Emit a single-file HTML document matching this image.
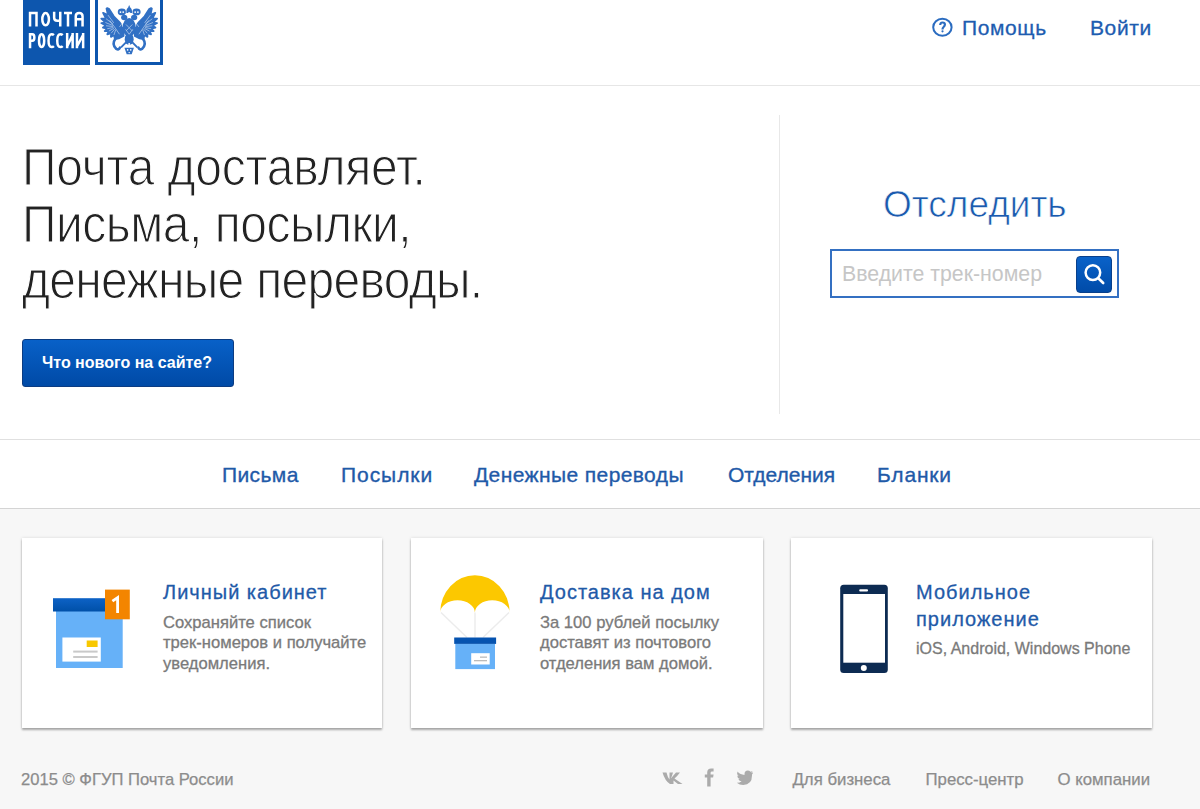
<!DOCTYPE html>
<html><head><meta charset="utf-8">
<style>
*{margin:0;padding:0;box-sizing:border-box}
html,body{width:1200px;height:809px;overflow:hidden;background:#f7f7f7;font-family:"Liberation Sans",sans-serif}
.abs{position:absolute;white-space:nowrap}
svg{position:absolute;overflow:visible}
#top{position:absolute;left:0;top:0;width:1200px;height:508px;background:#fff}
#hline{position:absolute;left:0;top:85px;width:1200px;height:1px;background:#e6e6e6}
#vline{position:absolute;left:779px;top:115px;width:1px;height:299px;background:#e8e8e8}
#nline1{position:absolute;left:0;top:438.7px;width:1200px;height:1px;background:#e0e0e0}
#nline2{position:absolute;left:0;top:508px;width:1200px;height:1px;background:#d4d4d4}
#logo1{position:absolute;left:23px;top:-5px;width:67px;height:70px;background:#0d56ae}
#logo2{position:absolute;left:95px;top:-5px;width:68px;height:70px;border:3px solid #0d56ae;border-bottom-width:3.5px;background:#fff}
.hdr{color:#1d5cb0;font-size:21px;line-height:1;letter-spacing:0.6px;-webkit-text-stroke:0.3px #1d5cb0}
.hero{color:#222;font-size:48px;line-height:1;-webkit-text-stroke:1.1px #fff;transform:scaleY(1.065);transform-origin:0 0}
#btn{position:absolute;left:22px;top:338.5px;width:212px;height:48px;border-radius:3px;background:linear-gradient(#0861c8,#004aa6);border:1px solid #0b3c82;color:#fff;font-weight:bold;font-size:16px;line-height:46px;text-align:center;padding-right:2px}
#track{color:#1a5aae;font-size:37px;line-height:1;-webkit-text-stroke:0.7px #fff}
#inp{position:absolute;left:830px;top:249px;width:289px;height:49px;border:2px solid #3470c2;background:#fff}
#sbtn{position:absolute;left:1076px;top:256px;width:36px;height:37px;border-radius:4px;background:linear-gradient(#0962c9,#004ba8);border:1px solid #08408c}
.ph{color:#c6c6c6;font-size:21.3px;line-height:1}
.nav{color:#1f5aa8;font-size:21px;line-height:1;-webkit-text-stroke:0.35px #1f5aa8}
.card{position:absolute;top:538px;height:190px;background:#fff;box-shadow:0 1.5px 2px rgba(0,0,0,0.3),0 0 3px rgba(0,0,0,0.13)}
.ct{color:#1f5aa8;font-size:20px;line-height:27px;letter-spacing:1px;-webkit-text-stroke:0.3px #1f5aa8}
.cd{color:#7a7a7a;font-size:16.6px;line-height:20.4px;-webkit-text-stroke:0.3px #7a7a7a}
.ft{color:#8c8c8c;font-size:16.8px;line-height:1;-webkit-text-stroke:0.25px #8c8c8c}
</style></head><body>
<div id="top"></div>
<div id="hline"></div>
<div id="vline"></div>
<div id="nline1"></div>
<div id="nline2"></div>

<!-- logo -->
<div id="logo1"></div>
<svg style="left:0;top:0" width="100" height="60" viewBox="0 0 100 60" fill="none" stroke="#fff" stroke-width="2.5">
  <path d="M30.05,26.6V13.05H36.5V26.6"/>
  <ellipse cx="45.6" cy="19.2" rx="3.3" ry="6.15"/>
  <path d="M54.15,11.8V17.8Q54.15,20.8 57.3,20.8H60.25M60.25,11.8V26.6"/>
  <path d="M64,13.05H72M68,11.8V26.6"/>
  <path d="M75.75,26.6V16.3Q75.75,13.05 79.15,13.05Q82.55,13.05 82.55,16.3V26.6M75.75,19.2H82.55"/>
  <path d="M30.05,48.2V34.35H32.2Q34.35,34.35 34.35,37.5Q34.35,40.8 32.2,40.8H30.05"/>
  <ellipse cx="41.6" cy="40.65" rx="2.6" ry="6.3"/>
  <path d="M53.9,35.2Q53,34.35 51.6,34.35Q48.55,34.35 48.55,40.65Q48.55,46.95 51.6,46.95Q53,46.95 53.9,46.1"/>
  <path d="M62.7,35.2Q61.8,34.35 60.3,34.35Q57.25,34.35 57.25,40.65Q57.25,46.95 60.3,46.95Q61.8,46.95 62.7,46.1"/>
  <path d="M67.15,33.1V48.2M67.15,46.5L72.65,34.8M72.65,33.1V48.2"/>
  <path d="M76.95,33.1V48.2M76.95,46.5L83.15,34.8M83.15,33.1V48.2"/>
</svg>
<div id="logo2"></div>
<svg style="left:95px;top:0" width="70" height="66" viewBox="0 0 858 809">
  <g fill="#3170c4">
    <path d="M150,100 175,112 230,200 299,270 322,300 325,335 350,345 350,440 290,470 244,480 232,429 195,452 198,407 151,420 170,381 119,381 150,352 97,338 135,316 77,283 128,276 77,229 136,230 99,158 159,185 141,104Z" stroke="#3170c4" stroke-width="22" stroke-linejoin="round"/>
    <path d="M688,100 663,112 608,200 539,270 516,300 513,335 488,345 488,440 548,470 594,480 606,429 643,452 640,407 687,420 668,381 719,381 688,352 741,338 703,316 761,283 710,276 761,229 702,230 739,158 679,185 697,104Z" stroke="#3170c4" stroke-width="22" stroke-linejoin="round"/>
    <ellipse cx="419" cy="335" rx="80" ry="115"/>
    <ellipse cx="419" cy="480" rx="55" ry="70"/>
    <ellipse cx="358" cy="215" rx="38" ry="34"/>
    <ellipse cx="480" cy="215" rx="38" ry="34"/>
    <ellipse cx="329" cy="146" rx="50" ry="42"/>
    <ellipse cx="509" cy="146" rx="50" ry="42"/>
    <path d="M384,160 Q380,95 419,85 Q458,95 454,160Z"/><path d="M405,95 L419,62 L433,95Z"/>
    <path d="M361,585 L477,585 L450,665 L388,665Z"/>
  </g>
  <g fill="none" stroke="#3170c4" stroke-linecap="round">
    <path stroke-width="32" d="M250,475 Q200,545 262,600 Q290,615 305,585"/>
    <path stroke-width="32" d="M588,475 Q638,545 576,600 Q548,615 533,585"/>
    <path stroke-width="24" d="M419,480 L325,575 M419,480 L513,575"/>
  </g>
  <g fill="none" stroke="#fff" stroke-width="10" opacity="0.6">
    <path d="M232,429L254,364 M198,407L242,356 M170,381L232,348 M150,352L226,337 M135,316L220,325 M128,276L218,312 M136,230L221,296 M159,185L229,280"/>
    <path d="M606,429L584,364 M640,407L596,356 M668,381L606,348 M688,352L612,337 M703,316L618,325 M710,276L620,312 M702,230L617,296 M679,185L609,280"/>
    <path d="M180,250 Q240,330 300,420 M658,250 Q598,330 538,420"/>
    <path d="M380,300 L458,380 M458,300 L380,380 M375,360 L419,420 L463,360 M345,270 L300,330 M493,270 L538,330"/>
  </g>
  <g fill="#fff">
    <rect x="407" y="150" width="24" height="50"/>
    <circle cx="312" cy="148" r="11"/><circle cx="346" cy="148" r="11"/>
    <circle cx="492" cy="148" r="11"/><circle cx="526" cy="148" r="11"/>
    
    <circle cx="266" cy="545" r="13"/><circle cx="572" cy="545" r="13"/>
    <circle cx="400" cy="612" r="10"/><circle cx="438" cy="612" r="10"/><circle cx="419" cy="645" r="9"/>
    <circle cx="419" cy="540" r="12"/>
  </g>
</svg>

<!-- header right -->
<svg style="left:930px;top:15px" width="26" height="26" viewBox="0 0 26 26">
  <ellipse cx="12.4" cy="12.3" rx="9.2" ry="8.45" fill="none" stroke="#2b6cc0" stroke-width="2"/>
  <path d="M10.2,10Q10.2,7.5 12.5,7.5Q14.9,7.5 14.9,9.6Q14.9,10.9 13.6,12Q12.5,12.9 12.5,14.6" fill="none" stroke="#2b6cc0" stroke-width="2.2"/>
  <circle cx="12.5" cy="16.3" r="1.1" fill="#2b6cc0"/>
</svg>
<div class="abs hdr" id="help" style="left:962px;top:16.5px">Помощь</div>
<div class="abs hdr" id="login" style="left:1090px;top:16.5px">Войти</div>

<!-- hero -->
<div class="abs hero" style="left:22px;top:142px;letter-spacing:-0.2px">Почта доставляет.</div>
<div class="abs hero" style="left:22px;top:198.6px;letter-spacing:-0.5px">Письма, посылки,</div>
<div class="abs hero" style="left:22px;top:255.2px;letter-spacing:-0.7px">денежные переводы.</div>
<div id="btn">Что нового на сайте?</div>

<!-- track -->
<div class="abs" id="track" style="left:883px;top:186px">Отследить</div>
<div id="inp"></div>
<div id="sbtn"></div>
<svg style="left:1076px;top:256px" width="36" height="37" viewBox="0 0 36 37">
  <circle cx="16.9" cy="16.6" r="7.3" fill="none" stroke="#fff" stroke-width="2.5"/>
  <path d="M22.3,22.2L27.2,27" stroke="#fff" stroke-width="2.6" stroke-linecap="round"/>
</svg>
<div class="abs ph" id="ph" style="left:842px;top:264px">Введите трек-номер</div>

<!-- nav -->
<div class="abs nav" style="left:222px;top:464px;letter-spacing:0.4px">Письма</div>
<div class="abs nav" style="left:341px;top:464px;letter-spacing:0.95px">Посылки</div>
<div class="abs nav" style="left:474px;top:464px;letter-spacing:0.4px">Денежные переводы</div>
<div class="abs nav" style="left:728px;top:464px">Отделения</div>
<div class="abs nav" style="left:877px;top:464px;letter-spacing:0.8px">Бланки</div>

<!-- cards -->
<div class="card" style="left:22px;width:360px"></div>
<div class="card" style="left:411px;width:352px"></div>
<div class="card" style="left:791px;width:361px"></div>

<svg style="left:0;top:0" width="140" height="700" viewBox="0 0 140 700">
  <defs><linearGradient id="g1" x1="0" y1="0" x2="0" y2="1"><stop offset="0" stop-color="#0d62c6"/><stop offset="1" stop-color="#0050a8"/></linearGradient></defs>
  <rect x="56" y="611" width="66.7" height="57" fill="#66b1f8"/>
  <rect x="53" y="598.2" width="52" height="13.3" fill="url(#g1)"/>
  <rect x="105" y="589.6" width="24.8" height="29.7" fill="#f38500"/>
  <path d="M112.4,601.2L117.6,597.6V613" fill="none" stroke="#fff" stroke-width="2.8"/>
  <rect x="62.4" y="637.5" width="38.4" height="24.1" fill="#fff"/>
  <rect x="86.7" y="640.5" width="10.9" height="6.5" fill="#f8c800"/>
  <rect x="73.2" y="650.6" width="24.4" height="2" fill="#c9c9c9"/>
  <rect x="73.2" y="656" width="24.4" height="2" fill="#c9c9c9"/>
</svg>
<div class="abs ct" style="left:163px;top:579px">Личный кабинет</div>
<div class="abs cd" style="left:163px;top:612.8px">Сохраняйте список<br>трек-номеров и получайте<br>уведомления.</div>

<svg style="left:400px;top:560px" width="130" height="130" viewBox="400 560 130 130">
  <path d="M441,612.5L467,637.5M475,612.5V637.5M509,612.5L483,637.5" stroke="#ececec" stroke-width="1.4"/>
  <path d="M440.2,612.6A34.7,37.4 0 0 1 509.6,612.6A17.3,12.3 0 0 0 474.9,612.6A17.3,12.3 0 0 0 440.2,612.6Z" fill="#fcc800"/>
  <rect x="455.3" y="643.9" width="39.7" height="25.2" fill="#66b1f8"/>
  <rect x="454.2" y="637.5" width="41.9" height="6.4" fill="#0553b0"/>
  <rect x="471.2" y="653.2" width="18.5" height="11.3" fill="#fff"/>
  <rect x="480" y="656.5" width="7" height="1.3" fill="#bbb"/>
  <rect x="474" y="660" width="13" height="1.3" fill="#bbb"/>
</svg>
<div class="abs ct" style="left:540px;top:579px">Доставка на дом</div>
<div class="abs cd" style="left:540px;top:612.8px">За 100 рублей посылку<br>доставят из почтового<br>отделения вам домой.</div>

<svg style="left:830px;top:575px" width="70" height="110" viewBox="830 575 70 110">
  <rect x="840.2" y="584.8" width="47.6" height="88.1" rx="3.5" fill="#0d2b52"/>
  <rect x="843.3" y="594" width="41.7" height="68.7" fill="#fff"/>
  <rect x="859.2" y="589.3" width="8.8" height="2.3" rx="1" fill="#fff"/>
  <circle cx="863.8" cy="668" r="3" fill="#fff"/>
</svg>
<div class="abs ct" style="left:916px;top:579px">Мобильное<br>приложение</div>
<div class="abs cd" style="left:916px;top:639px;font-size:16px">iOS, Android, Windows Phone</div>

<!-- footer -->
<div class="abs ft" style="left:21px;top:772px;font-size:16.6px">2015 © ФГУП Почта России</div>
<svg style="left:650px;top:760px" width="120" height="40" viewBox="650 760 120 40" fill="#ababab">
  <path d="M662.5,772.5H666.5Q667.5,777 669.5,779.5V772.5H673Q672,776.5 670.8,778.5L676,772.5H680Q677,776.5 674.5,778.5Q678,781 682.5,784H678Q675,781.5 673.5,780.5V784H670Q665,781 662.5,772.5Z"/>
  <path d="M707.2,786.5V777.5H704.8V774.6H707.2V772.6Q707.2,768.5 711.2,768.5H713.6V771.6H712Q710.6,771.6 710.6,772.8V774.6H713.6L713.1,777.5H710.6V786.5Z"/>
  <path d="M753,772.2Q752,772.7 751.2,772.8Q752.2,772.1 752.5,771Q751.5,771.6 750.5,771.8Q749.4,770.6 747.8,770.6Q744.5,770.6 744.5,774.2V774.9Q740.2,774.7 737.5,771.5Q736.3,773.8 738.5,775.9Q737.8,775.9 737.2,775.5Q737.2,778 739.8,778.9Q739.1,779.1 738.4,779Q739.2,781.2 741.6,781.3Q739.5,783 736.8,782.8Q739.5,785 743.2,785Q752,784.6 752,775.5V774.6Q753,773.5 753,772.2Z"/>
</svg>
<div class="abs ft" style="left:792.5px;top:771.8px">Для бизнеса</div>
<div class="abs ft" style="left:925.5px;top:771.8px">Пресс-центр</div>
<div class="abs ft" style="left:1057.5px;top:771.8px">О компании</div>
</body></html>
